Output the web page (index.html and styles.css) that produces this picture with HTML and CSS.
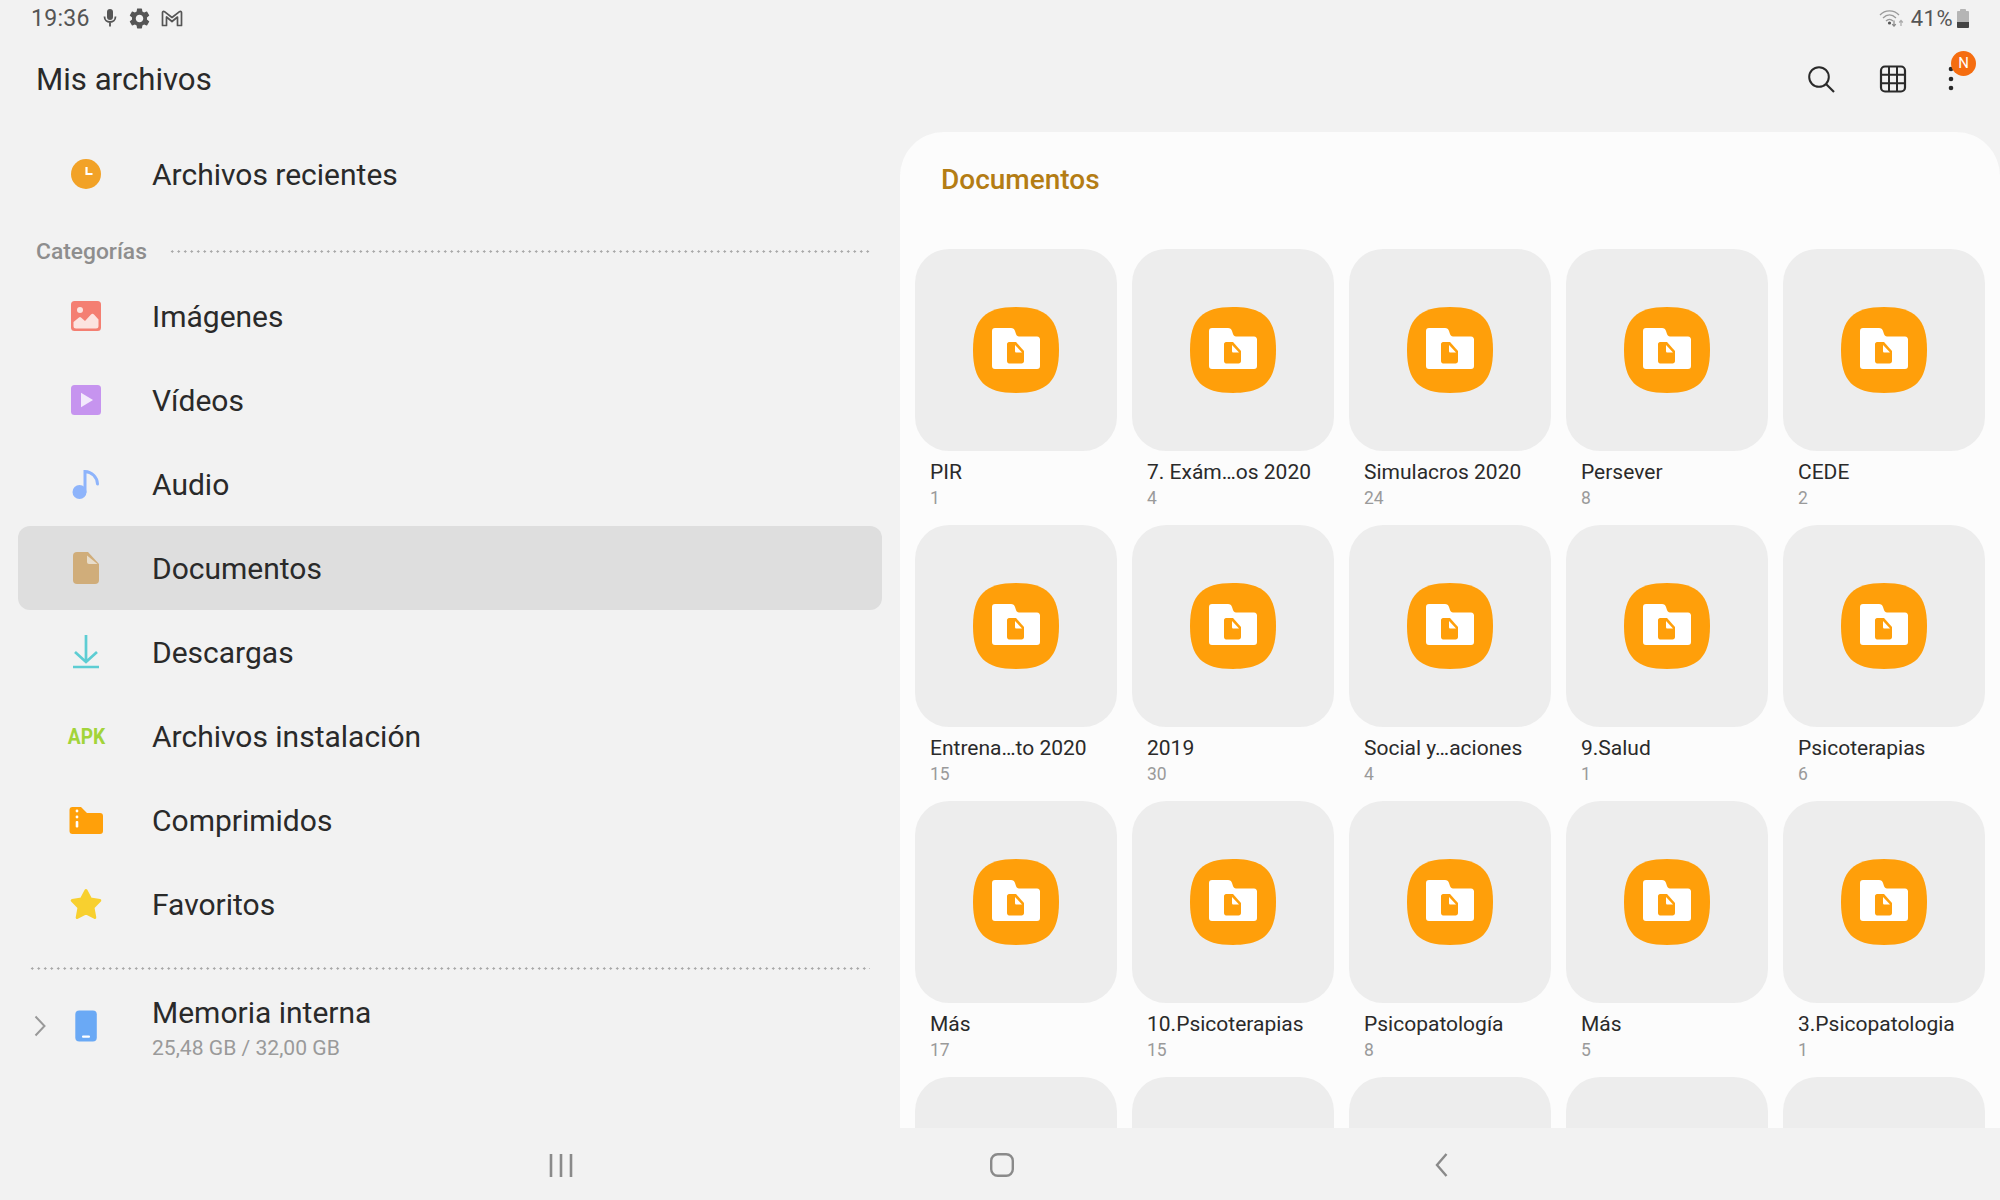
FILE: index.html
```html
<!DOCTYPE html>
<html lang="es">
<head>
<meta charset="utf-8">
<title>Mis archivos</title>
<link rel="stylesheet" href="styles.css">
</head>
<body>
<svg class="defs" width="0" height="0" aria-hidden="true">
  <symbol id="folder" viewBox="0 0 86 86">
    <path fill="#ff9f0a" d="M43 0C74 0 86 12 86 43C86 74 74 86 43 86C12 86 0 74 0 43C0 12 12 0 43 0Z"/>
    <path fill="#fff" d="M22 21H38C40 21 41.500 22 42 24L43 27C43.500 28.500 44.500 29.500 46 29.500H64C66 29.500 67 31 67 32.500V59C67 61 66 62 64 62H22C20 62 19 61 19 59V24C19 22 20 21 22 21Z"/>
    <path fill="#ff9f0a" d="M36 35H43L51 44V54C51 55.500 50 56.500 48.500 56.500H36C35 56.500 34 55.500 34 54V37C34 36 35 35 36 35Z"/>
    <path fill="#fff" d="M42 38L49 45.500H43.500C42.500 45.500 42 45 42 44Z"/>
  </symbol>
</svg>
<div class="screen">
  <header class="status">
    <div class="status-left">
      <span class="time">19:36</span>
      <svg class="st-mic" width="14" height="18" viewBox="0 0 14 18"><rect x="4" y="0" width="6" height="11" rx="3" fill="#555"/><path d="M1.500 7.500C1.500 11 4 13 7 13S12.500 11 12.500 7.500M7 13V17.500" fill="none" stroke="#555" stroke-width="1.800"/></svg>
      <svg class="st-gear" width="25" height="25" viewBox="0 0 24 24"><path fill="#555" d="M19.140 12.940c.04-.3.06-.61.06-.94 0-.32-.02-.64-.07-.94l2.030-1.580a.49.49 0 0 0 .12-.61l-1.920-3.320a.488.488 0 0 0-.59-.22l-2.390.96c-.5-.38-1.030-.7-1.620-.94l-.36-2.540a.484.484 0 0 0-.48-.41h-3.840c-.24 0-.43.17-.47.41l-.36 2.540c-.59.24-1.130.57-1.620.94l-2.390-.96c-.22-.08-.47 0-.59.22L2.740 8.870c-.12.21-.08.47.12.61l2.030 1.580c-.05.3-.09.63-.09.94s.02.64.07.94l-2.030 1.580a.49.49 0 0 0-.12.61l1.920 3.320c.12.22.37.29.59.22l2.390-.96c.5.38 1.030.7 1.620.94l.36 2.540c.05.24.24.41.48.41h3.840c.24 0 .44-.17.47-.41l.36-2.540c.59-.24 1.130-.56 1.620-.94l2.390.96c.22.08.47 0 .59-.22l1.920-3.320c.12-.22.07-.47-.12-.61l-2.010-1.580zM12 15.600c-1.980 0-3.600-1.620-3.600-3.600s1.620-3.600 3.600-3.600 3.600 1.620 3.600 3.600-1.620 3.600-3.600 3.600z"/></svg>
      <svg class="st-mail" width="22" height="17" viewBox="0 0 22 17"><path d="M1.500 15.500V2.500C1.500 1.500 2.500 1 3.500 1.700L11 7.500L18.500 1.700C19.500 1 20.500 1.500 20.500 2.500V15.500H16.500V7L11 11.500L5.500 7V15.500Z" fill="none" stroke="#555" stroke-width="1.700" stroke-linejoin="round"/></svg>
    </div>
    <div class="status-right">
      <svg width="25" height="18" viewBox="0 0 25 18"><g fill="none" stroke="#9a9a9a" stroke-width="1.300"><path d="M1 6C6 .5 15 .5 20 6"/><path d="M4 9C8 5 13 5 17 9"/><path d="M7 12C9 10 12 10 14 12"/></g><circle cx="10.500" cy="14" r="1.600" fill="#555"/><path d="M15 11.500V17M13.200 15.200L15 17.200L16.800 15.200" fill="none" stroke="#888" stroke-width="1.200"/><path d="M22 17V11.500M20.200 13.500L22 11.500L23.800 13.500" fill="none" stroke="#aaa" stroke-width="1.200"/></svg>
      <span class="battery-text">41%</span>
      <svg width="12" height="19" viewBox="0 0 12 19"><path d="M3 2V1C3 .5 3.500 0 4 0H8C8.500 0 9 .5 9 1V2H11C11.500 2 12 2.500 12 3V13H0V3C0 2.500 .5 2 1 2Z" fill="#b5b5b5"/><path d="M0 13H12V18C12 18.500 11.500 19 11 19H1C.5 19 0 18.500 0 18Z" fill="#444"/></svg>
    </div>
  </header>

  <div class="appbar">
    <h1 class="app-title">Mis archivos</h1>
    <div class="actions">
      <svg class="act" width="30" height="30" viewBox="0 0 30 30"><circle cx="13" cy="13" r="9.800" fill="none" stroke="#2a2a2a" stroke-width="2"/><path d="M20 20L28 28" stroke="#2a2a2a" stroke-width="2.200"/></svg>
      <svg class="act" width="30" height="30" viewBox="0 0 30 30"><rect x="3" y="2.500" width="24" height="25" rx="4" fill="none" stroke="#2a2a2a" stroke-width="2.200"/><path d="M11 2.500V27.500M19 2.500V27.500M3 10.800H27M3 19.200H27" stroke="#2a2a2a" stroke-width="2"/></svg>
      <div class="more">
        <svg class="act" width="30" height="30" viewBox="0 0 30 30"><circle cx="15" cy="5" r="2.300" fill="#2a2a2a"/><circle cx="15" cy="15" r="2.300" fill="#2a2a2a"/><circle cx="15" cy="24" r="2.300" fill="#2a2a2a"/></svg>
        <span class="badge">N</span>
      </div>
    </div>
  </div>

  <main class="main">
    <nav class="sidebar">
      <div class="row">
        <span class="slot"><svg width="40" height="40" viewBox="0 0 40 40"><circle cx="20" cy="20" r="15" fill="#f2a227"/><path d="M20.500 13V20H26.500" fill="none" stroke="#fff" stroke-width="2.200"/></svg></span>
        <span class="row-label">Archivos recientes</span>
      </div>
      <div class="cat-head"><span class="cat-label">Categorías</span><span class="dots"></span></div>
      <div class="row">
        <span class="slot"><svg width="40" height="40" viewBox="0 0 40 40"><rect x="5" y="5" width="30" height="30" rx="3.500" fill="#f47f72"/><circle cx="14" cy="14" r="3" fill="#fce4e0"/><path d="M7.500 30V26L13 21.500Q14 20.700 15 21.500L19 25L25 18.500Q26.500 17 28 18.500L32.500 23.500V30Q32.500 32.500 30 32.500H10Q7.500 32.500 7.500 30Z" fill="#fce4e0"/></svg></span>
        <span class="row-label">Imágenes</span>
      </div>
      <div class="row">
        <span class="slot"><svg width="40" height="40" viewBox="0 0 40 40"><rect x="5" y="5" width="30" height="30" rx="3.500" fill="#c694ef"/><path d="M15 12.700L27 20L15 27.300Z" fill="#f3e9fc"/></svg></span>
        <span class="row-label">Vídeos</span>
      </div>
      <div class="row">
        <span class="slot"><svg width="40" height="40" viewBox="0 0 40 40"><circle cx="13.500" cy="28" r="7" fill="#8eb4fb"/><path d="M19 28V7.500A13 13 0 0 1 31.500 20" fill="none" stroke="#8eb4fb" stroke-width="3" stroke-linecap="round"/></svg></span>
        <span class="row-label">Audio</span>
      </div>
      <div class="row row-active">
        <span class="slot"><svg width="40" height="40" viewBox="0 0 40 40"><path d="M11 4H22L33 16V32Q33 36 29 36H11Q7 36 7 32V8Q7 4 11 4Z" fill="#d0ad7a"/><path d="M21 7.500L31.500 16H23Q21 16 21 14Z" fill="#e8ddcb"/></svg></span>
        <span class="row-label">Documentos</span>
      </div>
      <div class="row">
        <span class="slot"><svg width="40" height="40" viewBox="0 0 40 40"><path d="M20 3V29M9 20L20 30L31 20M7 35H33" fill="none" stroke="#5dcdd3" stroke-width="2.700"/></svg></span>
        <span class="row-label">Descargas</span>
      </div>
      <div class="row">
        <span class="slot"><span class="apk">APK</span></span>
        <span class="row-label">Archivos instalación</span>
      </div>
      <div class="row">
        <span class="slot"><svg width="40" height="40" viewBox="0 0 40 40"><path d="M3.500 10Q3.500 7 6.500 7H15L21 13H34Q37 13 37 16V31Q37 34 34 34H6.500Q3.500 34 3.500 31Z" fill="#ffa00a"/><circle cx="11" cy="11" r="1.400" fill="#fff"/><circle cx="11" cy="17" r="1.400" fill="#fff"/><rect x="9.700" y="21" width="2.600" height="6.500" rx="1" fill="#fff"/></svg></span>
        <span class="row-label">Comprimidos</span>
      </div>
      <div class="row">
        <span class="slot"><svg width="40" height="40" viewBox="0 0 40 40"><path d="M20 6.500L24.500 15L33.800 16.500L27 23.500L28.800 33.500L20 29L11.200 33.500L13 23.500L6.200 16.500L15.500 15Z" fill="#f8d02f" stroke="#f8d02f" stroke-width="3" stroke-linejoin="round"/></svg></span>
        <span class="row-label">Favoritos</span>
      </div>
      <div class="divider"></div>
      <div class="storage">
        <svg class="chev" width="12" height="22" viewBox="0 0 12 22"><path d="M1.500 1.500L10.500 11L1.500 20.500" fill="none" stroke="#999" stroke-width="2"/></svg>
        <svg class="phone" width="40" height="40" viewBox="0 0 40 40"><rect x="9.300" y="4.500" width="21.500" height="31" rx="4" fill="#6aa9f5"/><rect x="16" y="29.500" width="8" height="2.200" rx="1" fill="#fff"/></svg>
        <div class="storage-text">
          <div class="row-label">Memoria interna</div>
          <div class="storage-sub">25,48 GB / 32,00 GB</div>
        </div>
      </div>
    </nav>

    <section class="panel">
      <h2 class="panel-title">Documentos</h2>
      <div class="grid">
        <article class="tile"><div class="card"><svg class="folder"><use href="#folder"/></svg></div><div class="name">PIR</div><div class="count">1</div></article>
        <article class="tile"><div class="card"><svg class="folder"><use href="#folder"/></svg></div><div class="name">7. Exám…os 2020</div><div class="count">4</div></article>
        <article class="tile"><div class="card"><svg class="folder"><use href="#folder"/></svg></div><div class="name">Simulacros 2020</div><div class="count">24</div></article>
        <article class="tile"><div class="card"><svg class="folder"><use href="#folder"/></svg></div><div class="name">Persever</div><div class="count">8</div></article>
        <article class="tile"><div class="card"><svg class="folder"><use href="#folder"/></svg></div><div class="name">CEDE</div><div class="count">2</div></article>
        <article class="tile"><div class="card"><svg class="folder"><use href="#folder"/></svg></div><div class="name">Entrena…to 2020</div><div class="count">15</div></article>
        <article class="tile"><div class="card"><svg class="folder"><use href="#folder"/></svg></div><div class="name">2019</div><div class="count">30</div></article>
        <article class="tile"><div class="card"><svg class="folder"><use href="#folder"/></svg></div><div class="name">Social y…aciones</div><div class="count">4</div></article>
        <article class="tile"><div class="card"><svg class="folder"><use href="#folder"/></svg></div><div class="name">9.Salud</div><div class="count">1</div></article>
        <article class="tile"><div class="card"><svg class="folder"><use href="#folder"/></svg></div><div class="name">Psicoterapias</div><div class="count">6</div></article>
        <article class="tile"><div class="card"><svg class="folder"><use href="#folder"/></svg></div><div class="name">Más</div><div class="count">17</div></article>
        <article class="tile"><div class="card"><svg class="folder"><use href="#folder"/></svg></div><div class="name">10.Psicoterapias</div><div class="count">15</div></article>
        <article class="tile"><div class="card"><svg class="folder"><use href="#folder"/></svg></div><div class="name">Psicopatología</div><div class="count">8</div></article>
        <article class="tile"><div class="card"><svg class="folder"><use href="#folder"/></svg></div><div class="name">Más</div><div class="count">5</div></article>
        <article class="tile"><div class="card"><svg class="folder"><use href="#folder"/></svg></div><div class="name">3.Psicopatologia</div><div class="count">1</div></article>
        <article class="tile"><div class="card"></div></article>
        <article class="tile"><div class="card"></div></article>
        <article class="tile"><div class="card"></div></article>
        <article class="tile"><div class="card"></div></article>
        <article class="tile"><div class="card"></div></article>
      </div>
    </section>
  </main>

  <footer class="navbar">
    <svg width="40" height="30" viewBox="0 0 40 30"><path d="M10 4V27M20 4V27M30 4V27" stroke="#8a8a8a" stroke-width="2.600" fill="none"/></svg>
    <svg width="40" height="30" viewBox="0 0 40 30"><rect x="10.200" y="4.200" width="21.600" height="21.600" rx="6.500" fill="none" stroke="#8a8a8a" stroke-width="2.400"/></svg>
    <svg width="40" height="30" viewBox="0 0 40 30"><path d="M25.500 4L16 15L25.500 26" fill="none" stroke="#8a8a8a" stroke-width="2.400"/></svg>
  </footer>
</div>
</body>
</html>
```
FILE: styles.css
```css
* { box-sizing: border-box; }
html, body { margin: 0; padding: 0; }
body {
  width: 2000px;
  height: 1200px;
  overflow: hidden;
  background: #f2f2f2;
  font-family: Roboto, "Liberation Sans", sans-serif;
  color: #2a2a2a;
}
.defs { position: absolute; }
.screen { width: 2000px; height: 1200px; display: flex; flex-direction: column; }

/* status bar */
.status {
  height: 36px;
  padding: 0 31px 0 31px;
  display: flex;
  justify-content: space-between;
  align-items: center;
  color: #555;
}
.status-left, .status-right { display: flex; align-items: center; }
.time { font-size: 23px; letter-spacing: .3px; width: 72px; }
.st-gear { margin-left: 10px; }
.st-mail { margin-left: 9px; }
.battery-text { font-size: 22px; margin: 0 4px 0 7px; letter-spacing: .5px; }

/* app bar */
.appbar {
  height: 96px;
  padding: 0 34px 10px 36px;
  display: flex;
  justify-content: space-between;
  align-items: center;
}
.app-title { margin: 0; font-size: 31.200px; font-weight: 400; }
.actions { display: flex; align-items: center; gap: 42px; }
.act { display: block; }
.more { position: relative; margin-left: -14px; }
.badge {
  position: absolute;
  top: -13px;
  left: 15px;
  width: 25px;
  height: 25px;
  border-radius: 50%;
  background: #f56d10;
  color: #fff;
  font-size: 15px;
  line-height: 25px;
  text-align: center;
}

/* main */
.main { height: 996px; display: flex; }
.sidebar { width: 900px; padding: 0 18px; }
.row { height: 84px; display: flex; align-items: center; border-radius: 12px; }
.row-active { background: #dedede; }
.slot {
  width: 134px;
  padding-left: 2px;
  flex: none;
  display: flex;
  justify-content: center;
  align-items: center;
}
.slot svg { display: block; }
.row-label { font-size: 30px; }
.apk {
  display: block;
  font-size: 22px;
  font-weight: 700;
  color: #a2d43a;
  transform: scaleX(.87);
}
.cat-head {
  height: 58px;
  padding: 12px 10px 0 18px;
  display: flex;
  align-items: center;
}
.cat-label { font-size: 22.800px; font-weight: 500; color: #8e8e8e; }
.dots, .divider {
  height: 3px;
  background: radial-gradient(circle, #a8a8a8 1px, transparent 1.300px) 0 0 / 6.500px 3px repeat-x;
}
.dots { flex: 1; margin-left: 22px; }
.divider { margin: 21px 12px 0 11px; }
.storage { height: 84px; margin-top: 14px; display: flex; align-items: center; }
.chev { margin-left: 16px; }
.phone { margin-left: 20px; }
.storage-text { margin: 2px 0 0 46px; }
.storage-sub { font-size: 21.100px; color: #9a9a9a; margin-top: 5px; }

/* panel */
.panel {
  width: 1100px;
  background: #fcfcfc;
  border-radius: 44px 44px 0 0;
  overflow: hidden;
}
.panel-title {
  margin: 0;
  height: 117px;
  padding: 29px 0 0 41px;
  font-size: 28px;
  line-height: 38px;
  font-weight: 500;
  color: #b47d14;
}
.grid {
  padding-left: 15px;
  display: grid;
  grid-template-columns: repeat(5, 202px);
  grid-auto-rows: 261px;
  column-gap: 15px;
  row-gap: 15px;
}
.card {
  width: 202px;
  height: 202px;
  background: #ededed;
  border-radius: 34px;
  display: flex;
  align-items: center;
  justify-content: center;
}
.folder { width: 86px; height: 86px; display: block; }
.name { margin: 8px 0 0 15px; font-size: 21px; line-height: 26px; }
.count { margin: 1px 0 0 15px; font-size: 17.500px; line-height: 24px; color: #9a9a9a; }

/* nav bar */
.navbar {
  height: 72px;
  padding: 2px 0 0 541px;
  display: flex;
  align-items: center;
  gap: 400px;
}
```
